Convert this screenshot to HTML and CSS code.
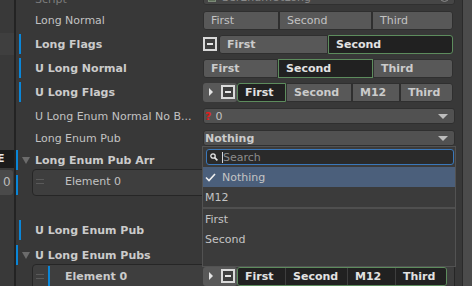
FILE: index.html
```html
<!DOCTYPE html>
<html lang="en">
<head>
    <meta charset="UTF-8">
    <meta name="viewport" content="width=device-width, initial-scale=1.0">
    <title>Inspector - SerEnumUtLong</title>
    <link rel="stylesheet" href="styles.css">
</head>
<body>
<div class="window">
    <div class="gutter">
        <div class="gutter-band"></div>
        <div class="gutter-dark">E</div>
        <div class="gutter-field">0</div>
    </div>
    <div class="divider"></div>

    <div class="inspector">
        <div class="row row-script">
            <div class="label plain"><span class="text disabled">Script</span></div>
            <div class="value">
                <div class="objfield">
                    <span class="script-icon"></span>
                    <span class="objname">SerEnumUtLong</span>
                    <span class="picker"></span>
                </div>
            </div>
        </div>

        <div class="row gap1">
            <div class="label plain"><span class="text">Long Normal</span></div>
            <div class="value">
                <div class="seg cols-ln">
                    <div class="btn">First</div>
                    <div class="btn">Second</div>
                    <div class="btn">Third</div>
                </div>
            </div>
        </div>

        <div class="row gap4">
            <div class="label over"><span class="bar"></span><span class="text bold">Long Flags</span></div>
            <div class="value flags">
                <span class="mixed"></span>
                <div class="seg bold cols-lf">
                    <div class="btn">First</div>
                    <div class="btn on">Second</div>
                </div>
            </div>
        </div>

        <div class="row gap4">
            <div class="label over"><span class="bar"></span><span class="text bold">U Long Normal</span></div>
            <div class="value">
                <div class="seg bold cols-uln">
                    <div class="btn">First</div>
                    <div class="btn on">Second</div>
                    <div class="btn">Third</div>
                </div>
            </div>
        </div>

        <div class="row gap4">
            <div class="label over"><span class="bar"></span><span class="text bold">U Long Flags</span></div>
            <div class="value flags">
                <div class="lead"><span class="play"></span><span class="mixed"></span></div>
                <div class="seg bold cols-ulf">
                    <div class="btn on">First</div>
                    <div class="btn">Second</div>
                    <div class="btn">M12</div>
                    <div class="btn">Third</div>
                </div>
            </div>
        </div>

        <div class="row gap4">
            <div class="label plain"><span class="text">U Long Enum Normal No B...</span></div>
            <div class="value">
                <div class="dropdown">
                    <span class="missing">?</span><span class="num">0</span>
                    <span class="caret"></span>
                </div>
            </div>
        </div>

        <div class="row gap2">
            <div class="label plain"><span class="text">Long Enum Pub</span></div>
            <div class="value">
                <div class="dropdown">
                    <span class="bold">Nothing</span>
                    <span class="caret"></span>
                </div>
            </div>
        </div>

        <div class="row gap2">
            <div class="label fold"><span class="bar"></span><span class="arrow"></span><span class="text bold">Long Enum Pub Arr</span></div>
        </div>

        <div class="listrow back1">
            <span class="bar list-bar"></span>
            <div class="listbox">
                <div class="erow">
                    <span class="handle"></span>
                    <span class="etext">Element 0</span>
                </div>
            </div>
        </div>

        <div class="row gap24">
            <div class="label over"><span class="bar"></span><span class="text bold">U Long Enum Pub</span></div>
        </div>

        <div class="row gap5">
            <div class="label fold"><span class="bar"></span><span class="arrow"></span><span class="text bold">U Long Enum Pubs</span></div>
        </div>

        <div class="listrow back1">
            <div class="listbox nobar">
                <div class="erow">
                    <span class="handle"></span>
                    <span class="bar ebar"></span>
                    <span class="etext bold">Element 0</span>
                    <div class="evalue flags">
                        <div class="lead"><span class="play"></span><span class="mixed"></span></div>
                        <div class="seg bold allon cols-el">
                            <div class="btn">First</div>
                            <div class="btn">Second</div>
                            <div class="btn">M12</div>
                            <div class="btn">Third</div>
                        </div>
                    </div>
                </div>
            </div>
        </div>
    </div>

    <div class="scrollbar"></div>

    <div class="menu">
        <div class="search">
            <svg class="glass" width="8" height="8" viewBox="0 0 8 8">
                <circle cx="3" cy="3" r="2.2" fill="none" stroke="#e6e6e6" stroke-width="1.3"/>
                <line x1="4.6" y1="4.6" x2="7.4" y2="7.4" stroke="#e6e6e6" stroke-width="1.6"/>
            </svg>
            <span class="cursor"></span>
            <span class="placeholder">Search</span>
        </div>
        <div class="item sel">
            <svg class="check" width="11" height="9" viewBox="0 0 11 9">
                <polyline points="1,4.5 4,7.5 10,1" fill="none" stroke="#f0f0f0" stroke-width="1.6"/>
            </svg>
            <span>Nothing</span>
        </div>
        <div class="item">M12</div>
        <div class="sep"></div>
        <div class="item">First</div>
        <div class="item">Second</div>
    </div>
</div>
</body>
</html>
```

FILE: styles.css
```css
* {
    box-sizing: border-box;
}
body {
    margin: 0;
    background: #383838;
    font-family: "DejaVu Sans", sans-serif;
    font-size: 11px;
    color: #c2c2c2;
    overflow: hidden;
}
.window {
    position: relative;
    display: flex;
    width: 472px;
    height: 286px;
    overflow: hidden;
}

/* left panel edge */
.gutter {
    width: 14px;
    flex: none;
    background: #393939;
    display: flex;
    flex-direction: column;
}
.gutter-band {
    margin-top: 33px;
    height: 22px;
    background: #3f3f3f;
}
.gutter-dark {
    margin-top: 95px;
    height: 18px;
    background: #1b1b1b;
    color: #e8e8e8;
    font-weight: bold;
    font-size: 11px;
    line-height: 18px;
    text-indent: -3px;
    overflow: hidden;
}
.gutter-field {
    margin-top: 2px;
    height: 25px;
    width: 13px;
    background: #4a4a4a;
    border-radius: 0 3px 3px 0;
    padding-left: 3px;
    line-height: 25px;
    font-size: 12px;
    color: #bdbdbd;
}
.divider {
    width: 2px;
    flex: none;
    background: #232323;
}
.scrollbar {
    width: 10px;
    flex: none;
    border-left: 1px solid #2a2a2a;
    background: #4b4b4b;
}

/* inspector rows */
.inspector {
    flex: 1;
    display: flex;
    flex-direction: column;
}
.row {
    display: flex;
    align-items: center;
    height: 20px;
    flex: none;
}
.row-script {
    margin-top: -11px;
}
.gap1 { margin-top: 1px; }
.gap2 { margin-top: 2px; }
.gap4 { margin-top: 4px; }
.gap5 { margin-top: 5px; }
.gap24 { margin-top: 24px; }
.back1 { margin-top: -1px; }

.label {
    width: 187px;
    flex: none;
    height: 100%;
    display: flex;
    align-items: center;
    white-space: nowrap;
}
.plain .text { margin-left: 19px; }
.over .bar { margin-left: 3px; }
.over .text { margin-left: 14px; }
.fold .arrow { margin-left: 4px; }
.fold .text { margin-left: 5px; }
.bar {
    width: 2px;
    height: 20px;
    flex: none;
    background: #0a86d8;
}
.arrow {
    width: 0;
    height: 0;
    border-left: 4px solid transparent;
    border-right: 4px solid transparent;
    border-top: 7px solid #6c6c6c;
}
.bold {
    font-weight: bold;
    color: #cbcbcb;
}
.disabled {
    color: #7c7c7c;
}
.value {
    width: 252px;
    flex: none;
}

/* script object field */
.objfield {
    margin-top: -3px;
    height: 15px;
    background: #464646;
    border: 1px solid #303030;
    border-radius: 3px;
    display: flex;
    align-items: center;
    color: #8a8a8a;
}
.script-icon {
    width: 8px;
    height: 9px;
    margin-left: 4px;
    background: #5d6e58;
    border: 1px solid #7c8a78;
}
.objname {
    margin-left: 6px;
}
.picker {
    margin-left: auto;
    margin-right: 5px;
    width: 9px;
    height: 9px;
    border: 1px solid #8a8a8a;
    border-radius: 50%;
}

/* enum button groups */
.seg {
    display: grid;
    height: 19px;
}
.cols-ln { grid-template-columns: 76px 93px 81px; }
.cols-lf { grid-template-columns: 109px 125px; }
.cols-uln { grid-template-columns: 75px 95px 80px; }
.cols-ulf { grid-template-columns: 49px 66px 48px 53px; }
.cols-el { grid-template-columns: 48px 62px 48px 52px; }
.btn {
    background: #585858;
    border: 1px solid #2f2f2f;
    padding-left: 7px;
    display: flex;
    align-items: center;
    white-space: nowrap;
    overflow: hidden;
}
.btn:first-child {
    border-radius: 3px 0 0 3px;
}
.btn:last-child {
    border-radius: 0 3px 3px 0;
}
.btn.on {
    background: #212121;
    border-color: #5d8c5d;
    color: #e2e2e2;
}
.seg.allon {
    border: 1px solid #5d8c5d;
    border-radius: 3px;
    overflow: hidden;
}
.allon .btn {
    background: #212121;
    border: none;
    border-right: 1px solid #3e3e3e;
    border-radius: 0;
    color: #e2e2e2;
}
.allon .btn:last-child {
    border-right: none;
}

.flags {
    display: flex;
    align-items: center;
}
.flags > .mixed {
    margin-right: 2px;
}
.mixed {
    position: relative;
    width: 14px;
    height: 14px;
    flex: none;
    border: 2px solid #d9d9d9;
    background: #3e3e3e;
}
.mixed::after {
    content: "";
    position: absolute;
    left: 2px;
    top: 4px;
    width: 6px;
    height: 2px;
    background: #e6e6e6;
}
.lead {
    width: 34px;
    height: 19px;
    flex: none;
    background: #585858;
    border-radius: 3px;
    display: flex;
    align-items: center;
    padding-left: 6px;
}
.play {
    width: 0;
    height: 0;
    border-left: 4px solid #e4e4e4;
    border-top: 4px solid transparent;
    border-bottom: 4px solid transparent;
    margin-right: 8px;
}

/* popups */
.dropdown {
    height: 16px;
    background: #515151;
    border: 1px solid #2f2f2f;
    border-radius: 3px;
    display: flex;
    align-items: center;
    padding-left: 1px;
}
.missing {
    color: #e21d1d;
    font-weight: bold;
    margin-right: 4px;
}
.caret {
    margin-left: auto;
    margin-right: 6px;
    width: 0;
    height: 0;
    border-left: 5px solid transparent;
    border-right: 5px solid transparent;
    border-top: 5px solid #bdbdbd;
}

/* reorderable lists */
.listrow {
    display: flex;
    align-items: flex-start;
    flex: none;
}
.list-bar {
    margin-top: 6px;
}
.listbox {
    margin-left: 14px;
    width: 423px;
    background: #3e3e3e;
    border: 1px solid #262626;
    border-radius: 4px;
    padding: 1px 7px 4px 3px;
}
.listbox.nobar {
    margin-left: 16px;
}
.erow {
    display: flex;
    align-items: center;
    height: 20px;
}
.handle {
    width: 8px;
    height: 5px;
    flex: none;
    border-top: 1px solid #5a5a5a;
    border-bottom: 1px solid #5a5a5a;
}
.etext {
    margin-left: 21px;
    white-space: nowrap;
}
.ebar {
    margin-left: 4px;
}
.ebar + .etext {
    margin-left: 15px;
    width: 138px;
}
.evalue {
    width: 244px;
    flex: none;
}

/* open dropdown menu */
.menu {
    position: absolute;
    left: 202px;
    top: 146px;
    width: 254px;
    height: 121px;
    background: #3b3b3b;
    border: 1px solid #525252;
    color: #c4c4c4;
}
.search {
    margin: 2px 1px 0 3px;
    height: 16px;
    background: #2a2a2a;
    border: 1px solid #3a78bb;
    border-radius: 3px;
    display: flex;
    align-items: center;
}
.glass {
    margin-left: 3px;
}
.cursor {
    width: 1px;
    height: 11px;
    margin-left: 4px;
    background: #d8d8d8;
}
.placeholder {
    color: #8c8c8c;
}
.item {
    height: 20px;
    display: flex;
    align-items: center;
    padding-left: 2px;
}
.item.sel {
    margin-top: 2px;
    background: #4b5f7b;
}
.check {
    margin-left: 0;
    margin-right: 6px;
}
.sep {
    height: 2px;
    background: #4f4f4f;
}
```
